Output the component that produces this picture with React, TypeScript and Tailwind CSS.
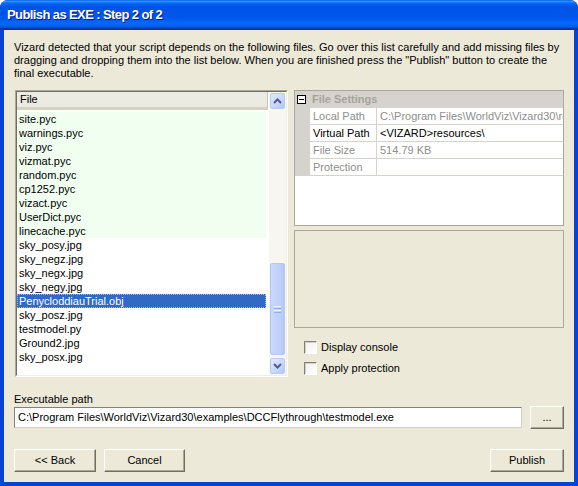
import React from "react";

const files = [
  "site.pyc",
  "warnings.pyc",
  "viz.pyc",
  "vizmat.pyc",
  "random.pyc",
  "cp1252.pyc",
  "vizact.pyc",
  "UserDict.pyc",
  "linecache.pyc",
  "sky_posy.jpg",
  "sky_negz.jpg",
  "sky_negx.jpg",
  "sky_negy.jpg",
  "PenycloddiauTrial.obj",
  "sky_posz.jpg",
  "testmodel.py",
  "Ground2.jpg",
  "sky_posx.jpg",
];

function Chevron({ up }: { up?: boolean }) {
  return (
    <svg width="9" height="6" viewBox="0 0 9 6">
      <path
        d={up ? "M1 5 L4.5 1.5 L8 5" : "M1 1 L4.5 4.5 L8 1"}
        fill="none"
        stroke="#4D6185"
        strokeWidth="2"
      />
    </svg>
  );
}

function ScrollBtn({ up }: { up?: boolean }) {
  return (
    <div className="h-[16px] mx-[1px] rounded-[2px] border border-[#B9CCF7] bg-[linear-gradient(135deg,#E1EAFE_0%,#C6D6FC_60%,#B3C8F6_100%)] flex items-center justify-center">
      <Chevron up={up} />
    </div>
  );
}

function XPButton({ children, w }: { children: React.ReactNode; w: string }) {
  return (
    <div
      className={`${w} h-[23px] flex items-center justify-center border border-t-white border-l-white border-r-[#716F64] border-b-[#716F64] bg-[#ECE9D8] shadow-[inset_-1px_-1px_0_#ACA899] text-[11px] text-black`}
    >
      {children}
    </div>
  );
}

function Checkbox({ label }: { label: string }) {
  return (
    <div className="flex items-center h-[13px]">
      <div className="w-[13px] h-[13px] border border-t-[#808080] border-l-[#808080] border-r-white border-b-white bg-[linear-gradient(135deg,#F0EFE9_0%,#FFFFFF_100%)] shadow-[inset_1px_1px_0_#D4D0C8]" />
      <span className="ml-[4px] text-[11px] text-black">{label}</span>
    </div>
  );
}

const props: [string, string, boolean][] = [
  ["Local Path", "C:\\Program Files\\WorldViz\\Vizard30\\re", false],
  ["Virtual Path", "<VIZARD>resources\\", true],
  ["File Size", "514.79 KB", false],
  ["Protection", "", false],
];

export default function App() {
  return (
    <div
      className="w-[578px] h-[486px] flex flex-col rounded-t-[8px] overflow-hidden bg-[#0842D6]"
      style={{ fontFamily: '"Liberation Sans", Arial, sans-serif' }}
    >
      {/* Title bar */}
      <div className="h-[30px] shrink-0 flex items-center pl-[7px] bg-[linear-gradient(to_bottom,#0058ee_0%,#3593ff_4%,#288eff_6%,#127dff_8%,#036ffc_10%,#0262ee_14%,#0057e5_20%,#0054e3_24%,#0055eb_56%,#005bf5_66%,#026afe_76%,#0062ef_86%,#0052d6_92%,#0040ab_94%,#003092_100%)]">
        <span className="text-white font-bold text-[13px] tracking-[-0.6px] [text-shadow:1px_1px_0_#0A1883]">
          Publish as EXE : Step 2 of 2
        </span>
      </div>

      {/* Client area */}
      <div className="flex-1 mx-[4px] mb-[4px] bg-[#ECE9D8] flex flex-col">
        <p className="mt-[11px] ml-[10px] mr-[6px] text-[11px] leading-[13px] text-black">
          Vizard detected that your script depends on the following files. Go over this list carefully and add missing files by
          dragging and dropping them into the list below. When you are finished press the "Publish" button to create the
          final executable.
        </p>

        <div className="mt-[10px] ml-[11px] flex">
          {/* File list */}
          <div className="w-[273px] h-[287px] border border-t-[#ACA899] border-l-[#ACA899] border-r-white border-b-white">
            <div className="w-full h-full border border-t-[#716F64] border-l-[#716F64] border-r-[#F1EFE2] border-b-[#F1EFE2] bg-white flex">
              <div className="flex-1 flex flex-col">
                <div className="h-[18px] flex">
                  <div className="w-[251px] h-[18px] bg-[#EBEAE3] border-b-[3px] border-b-[#D6D2C2] border-r border-r-[#C7C5B2] flex items-center pl-[3px] text-[11px] text-black">
                    File
                  </div>
                  <div className="flex-1 bg-white" />
                </div>
                <div className="pt-[2px] flex flex-col">
                  {files.map((f, i) => {
                    const green = i < 9;
                    const sel = f === "PenycloddiauTrial.obj";
                    return (
                      <div key={f} className="h-[14px] flex">
                        <div
                          className={`w-[249px] h-[14px] pl-[2px] flex items-center text-[11px] ${
                            sel
                              ? "bg-[#316AC5] text-white outline-1 outline-dotted outline-[#9FB7E0] -outline-offset-1"
                              : green
                              ? "bg-[#F0FFF0] text-black"
                              : "bg-white text-black"
                          }`}
                        >
                          {f}
                        </div>
                      </div>
                    );
                  })}
                </div>
              </div>
              {/* Scrollbar */}
              <div className="w-[17px] flex flex-col pt-[1px] pb-[1px] bg-[#F7F6F1]">
                <ScrollBtn up />
                <div className="flex-1 flex flex-col">
                  <div className="h-[154px]" />
                  <div className="h-[92px] mx-[1px] rounded-[2px] border border-[#B4C8F6] bg-[linear-gradient(to_right,#C9D8FC_0%,#BFD1FB_60%,#B4C8F6_100%)] flex flex-col items-center justify-center gap-[1px]">
                    <div className="w-[7px] h-[1px] bg-[#EEF4FE]" />
                    <div className="w-[7px] h-[1px] bg-[#8CB0F8]" />
                    <div className="w-[7px] h-[1px] bg-[#EEF4FE]" />
                    <div className="w-[7px] h-[1px] bg-[#8CB0F8]" />
                  </div>
                </div>
                <ScrollBtn />
              </div>
            </div>
          </div>

          {/* Right column */}
          <div className="ml-[6px] w-[270px] flex flex-col">
            <div className="h-[136px] border border-[#ACA899] bg-white flex flex-col overflow-hidden">
              <div className="flex h-[85px] min-w-0">
                <div className="w-[15px] shrink-0 bg-[#D6D3CE] flex flex-col">
                  <div className="mt-[4px] ml-[2px] w-[9px] h-[9px] border border-black bg-white flex items-center justify-center">
                    <div className="w-[5px] h-[1px] bg-black" />
                  </div>
                </div>
                <div className="flex-1 min-w-0 flex flex-col">
                  <div className="h-[17px] bg-[#D6D3CE] flex items-center pl-[2px] text-[11px] font-bold text-[#A6A49A]">
                    File Settings
                  </div>
                  {props.map(([k, v, active]) => (
                    <div key={k} className="h-[17px] flex border-b border-[#D6D3CE] min-w-0">
                      <div
                        className={`w-[67px] shrink-0 pl-[3px] flex items-center text-[11px] border-r border-[#D6D3CE] ${
                          active ? "text-black" : "text-[#8E8E8E]"
                        }`}
                      >
                        {k}
                      </div>
                      <div
                        className={`flex-1 min-w-0 pl-[3px] flex items-center text-[11px] whitespace-nowrap overflow-hidden ${
                          active ? "text-black" : "text-[#8E8E8E]"
                        }`}
                      >
                        {v}
                      </div>
                    </div>
                  ))}
                </div>
              </div>
            </div>
            <div className="mt-[4px] h-[98px] border border-[#ACA899] bg-[#ECE9D8]" />
            <div className="mt-[13px] ml-[10px] flex flex-col gap-[8px]">
              <Checkbox label="Display console" />
              <Checkbox label="Apply protection" />
            </div>
          </div>
        </div>

        {/* Executable path */}
        <div className="mt-[16px] ml-[10px] h-[13px] flex items-center text-[11px] text-black">
          Executable path
        </div>
        <div className="ml-[10px] flex items-center">
          <div className="w-[508px] h-[21px] border border-t-[#808080] border-l-[#808080] border-r-[#D4D0C8] border-b-[#D4D0C8] bg-white flex items-center pl-[3px] text-[11px] text-black whitespace-nowrap overflow-hidden">
            C:\Program Files\WorldViz\Vizard30\examples\DCCFlythrough\testmodel.exe
          </div>
          <div className="ml-[8px]">
            <XPButton w="w-[34px]">...</XPButton>
          </div>
        </div>

        {/* Buttons */}
        <div className="mt-[20px] ml-[10px] mr-[10px] flex items-center">
          <XPButton w="w-[82px]">&lt;&lt; Back</XPButton>
          <div className="ml-[8px]">
            <XPButton w="w-[81px]">Cancel</XPButton>
          </div>
          <div className="flex-1" />
          <XPButton w="w-[74px]">Publish</XPButton>
        </div>
      </div>
    </div>
  );
}
